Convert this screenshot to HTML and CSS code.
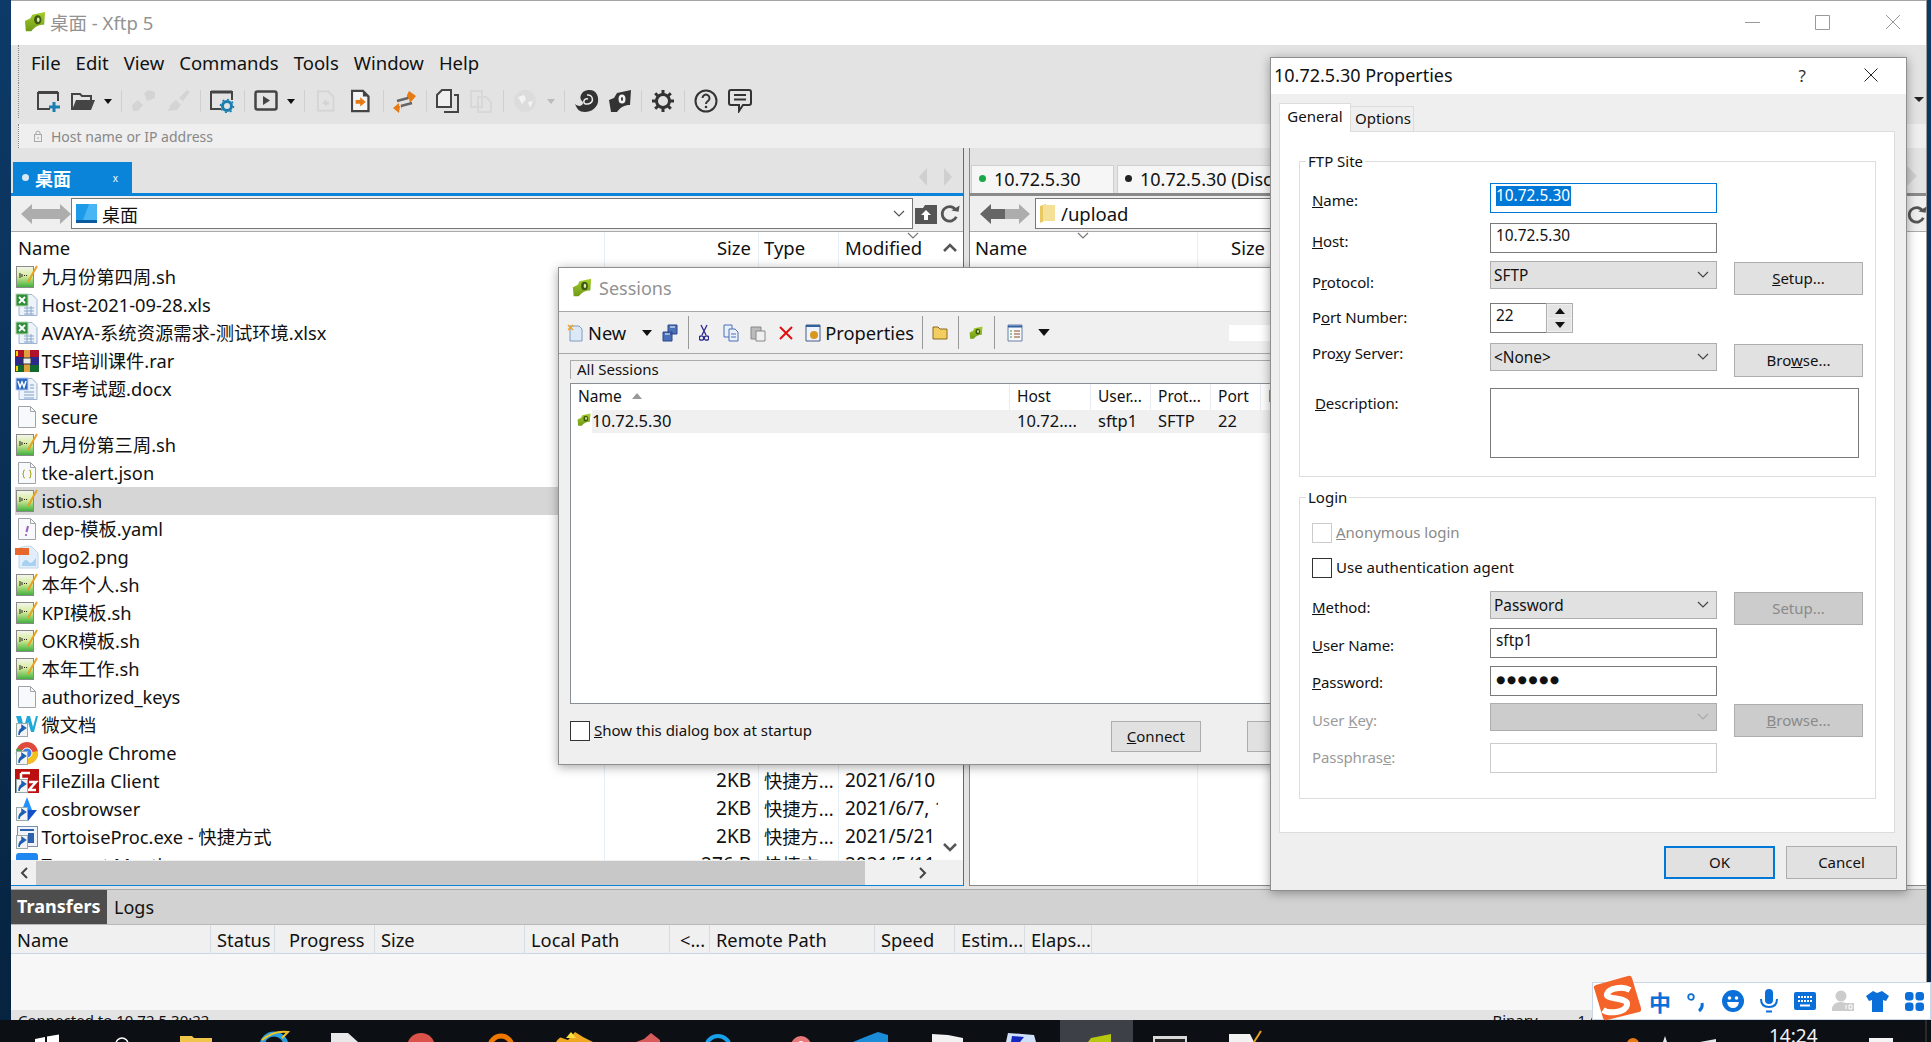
FILE: index.html
```html
<!DOCTYPE html>
<html lang="en">
<head>
<meta charset="utf-8">
<title>桌面 - Xftp 5</title>
<link rel="stylesheet" href="styles.css">
</head>
<body>
<svg class="defs" width="0" height="0">
  <defs>
    <linearGradient id="gGreen" x1="0" y1="0" x2="0" y2="1"><stop offset="0" stop-color="#f4f6ee"/><stop offset=".45" stop-color="#d8ec9a"/><stop offset="1" stop-color="#3cae3a"/></linearGradient>
    <linearGradient id="gLeaf" x1="0" y1="0" x2="0" y2="1"><stop offset="0" stop-color="#a5cf2a"/><stop offset="1" stop-color="#6f9a18"/></linearGradient>
    <symbol id="xftp" viewBox="0 0 24 24"><path d="M1 11l6-3 2-4 14-3-1 14c-6 0-10 2-14 7l-6 0z" fill="url(#gLeaf)"/><ellipse cx="15" cy="9.500" rx="4" ry="5" fill="#3f5a10"/><ellipse cx="15.500" cy="9.500" rx="1.500" ry="2.500" fill="#dfe9b0"/></symbol>
    <symbol id="ics" viewBox="0 0 24 24"><rect x="1.500" y="1.500" width="17" height="21" fill="url(#gGreen)" stroke="#8a8a8a"/><path d="M5 8v5M7 9v3M9 10.500h1M11 10.500h1" stroke="#222" fill="none"/><path d="M13 17L22 1" stroke="#e8a020" stroke-width="2"/></symbol>
    <symbol id="icxls" viewBox="0 0 24 24"><path d="M4 1.500h13l5 5v16H4z" fill="#eef3fa" stroke="#9db4d2"/><path d="M9 15h10M9 18h10M9 21h10M12 13v9M16 13v9" stroke="#8ba7cb"/><rect x="1" y="1" width="12" height="12" fill="#2f8f3c" stroke="#b8d8b0"/><path d="M4 4l6 6M10 4l-6 6" stroke="#fff" stroke-width="1.800"/></symbol>
    <symbol id="icdoc" viewBox="0 0 24 24"><path d="M4 1.500h13l5 5v16H4z" fill="#eef3fa" stroke="#9db4d2"/><path d="M9 15h10M9 18h10M9 21h10M15 8h4M15 11h4" stroke="#7f9ecb"/><rect x="1" y="1" width="12" height="12" fill="#2d68c4" stroke="#bcd0ee"/><path d="M3 4l2 6 2-5 2 5 2-6" stroke="#fff" stroke-width="1.500" fill="none"/></symbol>
    <symbol id="icrar" viewBox="0 0 24 24"><rect y="1" width="24" height="7" fill="#b0122a"/><rect y="8" width="24" height="8" fill="#2a2a8c"/><rect y="16" width="24" height="7" fill="#116a2c"/><rect x="9" y="1" width="6" height="22" fill="#e0a040"/><rect x="8" y="9" width="8" height="6" fill="#eee" stroke="#333"/><path d="M2 2v5M2 17v5" stroke="#ffd000" stroke-width="2"/></symbol>
    <symbol id="icblank" viewBox="0 0 24 24"><path d="M3.500 1.500h12l5 5v16h-17z" fill="#f8f9fa" stroke="#a0a4a8"/><path d="M15.500 1.500v5h5" fill="none" stroke="#a0a4a8"/></symbol>
    <symbol id="icjson" viewBox="0 0 24 24"><use href="#icblank"/><path d="M10 9q-2 0-1.500 2t-1 2q1.500 0 1 2t1.500 2M14 9q2 0 1.500 2t1 2q-1.500 0-1 2t-1.500 2" fill="none" stroke="#a9a91c"/></symbol>
    <symbol id="icyaml" viewBox="0 0 24 24"><use href="#icblank"/><path d="M13 9l-1.500 6" stroke="#9a5cc4" stroke-width="2"/><circle cx="11" cy="18" r="1.100" fill="#9a5cc4"/></symbol>
    <symbol id="icpng" viewBox="0 0 24 24"><path d="M4 3c6-2 12-3 14 0l5 5v15H4z" fill="#e2effa" stroke="#c0d4e8"/><path d="M7 19c2-5 5-5 7-2s5-2 7-4v8H7z" fill="#a8d0f0"/><rect y="3" width="14" height="7" fill="#e8672a"/></symbol>
    <symbol id="lnk" viewBox="0 0 24 24"><rect x="1.500" y="10.500" width="11" height="13" fill="#f4f4f4" stroke="#9aa"/><path d="M4 22c0-6 2-7 5-7M7 12.500l3.500 2.500-3.500 2.500z" stroke="#1c5fb4" stroke-width="1.500" fill="#1c5fb4"/></symbol>
    <symbol id="back" viewBox="0 0 25 22"><path d="M0 11L11 1v5h14v10H11v5z" fill="currentColor"/></symbol>
    <symbol id="fwd" viewBox="0 0 25 22"><path d="M25 11L14 1v5H0v10h14v5z" fill="currentColor"/></symbol>
    <symbol id="refresh" viewBox="0 0 24 24"><path d="M20 15a8 8 0 1 1-1-8" fill="none" stroke="#555" stroke-width="3"/><path d="M15 9h8v-7z" transform="rotate(10 19 6)" fill="#555"/></symbol>
    <symbol id="chev" viewBox="0 0 12 8"><path d="M1 1l5 5 5-5" fill="none" stroke="currentColor" stroke-width="1.200"/></symbol>
    <symbol id="drop" viewBox="0 0 10 6"><path d="M0 0h10L5 6z" fill="currentColor"/></symbol>
  </defs>
</svg>

<div class="desktop">
  <main class="xftp">
    <header class="title">
      <svg class="title-ico" width="24" height="22"><use href="#xftp"/></svg>
      <span class="title-text">桌面 - Xftp 5</span>
      <svg class="winctl" width="170" height="20" viewBox="0 0 170 20" fill="none" stroke="#999"><path d="M0 10.500h15M70.500 3.500h14v14h-14zM141 3l14 14M155 3l-14 14"/></svg>
    </header>
    <nav class="menu"><span>File</span><span>Edit</span><span>View</span><span>Commands</span><span>Tools</span><span>Window</span><span>Help</span></nav>
    <div class="toolbar">
      <svg width="26" height="24" viewBox="0 0 26 24" fill="none" stroke="#444" stroke-width="2"><path d="M14 20H2V4h20v8M2 3h20" /><path d="M2 3.500h20" stroke-width="3"/><path d="M18 13v10M13 18h11" stroke="#1a7fb0" stroke-width="3"/></svg>
      <svg width="24" height="24" viewBox="0 0 24 24"><path d="M1 21V5h8l2 2h9v4" fill="none" stroke="#444" stroke-width="2"/><path d="M1 21l4-10h19l-4 10z" fill="#444"/></svg>
      <svg class="dk" width="8" height="24" viewBox="0 0 8 24"><path d="M0 10h8l-4 5z" fill="#111"/></svg>
      <i class="sep"></i>
      <svg width="27" height="24" viewBox="0 0 27 24" fill="#d4d4d4"><path d="M2 22l-1-6 6-5 5 5-5 6zM16 12l-3-8 5-3 6 2 0 6z"/></svg>
      <svg width="24" height="24" viewBox="0 0 24 24" fill="#d4d4d4"><path d="M1 22l3-7 5-4 5 5-4 5zM12 9l8-8 3 2-7 9z"/></svg>
      <i class="sep"></i>
      <svg width="25" height="24" viewBox="0 0 25 24" fill="none"><path d="M11 20H1V3h21v8" stroke="#444" stroke-width="2"/><path d="M1 3h21" stroke="#444" stroke-width="3"/><circle cx="17" cy="17" r="4.500" stroke="#1a7fb0" stroke-width="3"/><circle cx="17" cy="17" r="6.500" stroke="#1a7fb0" stroke-width="1.500" stroke-dasharray="2 3"/></svg>
      <i class="sep"></i>
      <svg width="24" height="24" viewBox="0 0 24 24"><rect x="1.500" y="2.500" width="21" height="18" rx="2" fill="none" stroke="#444" stroke-width="2.500"/><path d="M9 7l7 4.500-7 4.500z" fill="#444"/></svg>
      <svg width="8" height="24" viewBox="0 0 8 24"><path d="M0 10h8l-4 5z" fill="#111"/></svg>
      <i class="sep"></i>
      <svg class="pad3" width="23" height="24" viewBox="0 0 23 24"><path d="M1 1h12l6 6v16H1z" fill="none" stroke="#d4d4d4" stroke-width="2"/><path d="M6 14l5-4v3h3v3h-3v3z" fill="#d4d4d4"/></svg>
      <svg class="pad5" width="25" height="24" viewBox="0 0 25 24"><path d="M1 1h12l6 6v16H1z" fill="#f5f5f5" stroke="#444" stroke-width="2.500"/><path d="M13 1l6 6h-6z" fill="#444"/><path d="M5 11h5V8l6 5-6 5v-3H5z" fill="#e87a14"/></svg>
      <i class="sep"></i>
      <svg width="24" height="24" viewBox="0 0 24 24"><path d="M14 10v-3l-2 1 2-1V6l2-4 7 5-6 7-1-4z" fill="#e87a14"/><path d="M4 12l11-3" stroke="#666" stroke-width="2.500"/><path d="M9 17v3L7 16l0 1-1 7-6-5 6-5 0 3z" fill="#e87a14"/><path d="M8 17l11-3" stroke="#666" stroke-width="2.500"/></svg>
      <i class="sep"></i>
      <svg width="25" height="24" viewBox="0 0 25 24" fill="none" stroke="#444" stroke-width="2"><path d="M1 18V6l5-5h9v17z" fill="#f0f0f0"/><path d="M18 6h4v17H8"/></svg>
      <svg width="24" height="24" viewBox="0 0 24 24" fill="none" stroke="#d8d8d8" stroke-width="2"><path d="M1 2h11v16H1zM8 8h8l5 5v10H8z"/></svg>
      <i class="sep"></i>
      <svg width="25" height="24" viewBox="0 0 25 24"><circle cx="12" cy="12" r="11" fill="#dcdcdc"/><path d="M5 8l6-2 2 4-4 5zM15 13l5-1-3 7z" fill="#f3f3f3"/></svg>
      <svg width="8" height="24" viewBox="0 0 8 24"><path d="M0 10h8l-4 5z" fill="#bbb"/></svg>
      <i class="sep"></i>
      <svg width="25" height="24" viewBox="0 0 25 24"><path d="M1 15C7 20 11 14 8 12S6 2 14 1s11 6 10 12-7 10-13 10S3 20 1 15z" fill="#333"/><path d="M13 6c6-1 8 8 1 9s-4-7 0-5" fill="none" stroke="#eee" stroke-width="1.500"/></svg>
      <svg width="24" height="24" viewBox="0 0 24 24"><path d="M1 11l5-2 3-5 14-3-1 15c-6 0-9 2-13 7H3z" fill="#333"/><ellipse cx="14" cy="10" rx="3.500" ry="4.500" fill="#f2f2f2"/><ellipse cx="14" cy="10" rx="1" ry="2" fill="#333"/></svg>
      <i class="sep"></i>
      <svg width="24" height="24" viewBox="0 0 24 24"><circle cx="12" cy="12" r="6.500" fill="none" stroke="#333" stroke-width="3"/><path d="M12 1v5M12 18v5M1 12h5M18 12h5M4.200 4.200l3.500 3.500M16.300 16.300l3.500 3.500M19.800 4.200l-3.500 3.500M7.700 16.300l-3.500 3.500" stroke="#333" stroke-width="3"/></svg>
      <i class="sep"></i>
      <svg width="25" height="24" viewBox="0 0 25 24"><circle cx="12" cy="12" r="10.500" fill="none" stroke="#333" stroke-width="2"/><path d="M8.500 9a3.500 3.500 0 1 1 5.500 3c-1.500 1-2 1.500-2 3" fill="none" stroke="#333" stroke-width="2"/><circle cx="12" cy="18" r="1.300" fill="#333"/></svg>
      <svg width="24" height="24" viewBox="0 0 24 24" fill="none" stroke="#333" stroke-width="2"><path d="M3 1h18q2 0 2 2v11q0 2-2 2h-6l-4 6v-6H3q-2 0-2-2V3q0-2 2-2zM6 6h12M6 10.500h12"/></svg>
      <svg class="tb-end" width="10" height="24" viewBox="0 0 10 24"><path d="M0 11h10l-5 5z" fill="#222"/></svg>
    </div>
    <div class="addr-wrap">
      <div class="addr">
        <svg width="10" height="12" viewBox="0 0 10 12" fill="none" stroke="#aaa"><rect x="1.500" y="4.500" width="7" height="7"/><path d="M3 4V2q2-2 4 0v2M5 7v2"/></svg>
        <span>Host name or IP address</span>
      </div>
    </div>

    <div class="panes">
      <section class="pane pane-l">
        <div class="tabs tabs-l">
          <div class="tab-active"><i class="dot"></i><b>桌面</b><span class="x">x</span></div>
          <div class="tab-arrows"><svg width="10" height="18" viewBox="0 0 10 18"><path d="M9 0v18L1 9z" fill="#cfcfcf"/></svg><svg width="10" height="18" viewBox="0 0 10 18"><path d="M1 0v18l8-9z" fill="#cfcfcf"/></svg></div>
        </div>
        <div class="navbar">
          <div class="arrows"><svg width="25" height="22"><use href="#back"/></svg><svg width="25" height="22"><use href="#fwd"/></svg></div>
          <div class="combo-path">
            <svg width="23" height="21" viewBox="0 0 23 21"><path d="M1 1h21v16H1z" fill="#1e9be8"/><path d="M1 17h21v3H1z" fill="#0a5aa0"/><path d="M14 1h8v16H8z" fill="#48b5f5"/></svg>
            <span class="path-text">桌面</span>
            <svg class="chev" width="12" height="8"><use href="#chev"/></svg>
          </div>
          <svg class="upfolder" width="24" height="22" viewBox="0 0 24 22"><path d="M1 5h8l2-3h12v19H1z" fill="#555"/><path d="M12 7l5 5h-3v5h-4v-5H7z" fill="#fff"/></svg>
          <svg width="22" height="24"><use href="#refresh"/></svg>
        </div>
        <div class="list">
          <div class="rows">
            <div class="row head"><span class="c1">Name</span><span class="c2">Size</span><span class="c3">Type</span><span class="c4 sorted">Modified<svg class="caret" width="12" height="8"><use href="#chev"/></svg></span></div>
            <div class="row"><span class="c1"><svg class="ic"><use href="#ics"/></svg>九月份第四周.sh</span></div>
            <div class="row"><span class="c1"><svg class="ic"><use href="#icxls"/></svg>Host-2021-09-28.xls</span></div>
            <div class="row"><span class="c1"><svg class="ic"><use href="#icxls"/></svg>AVAYA-系统资源需求-测试环境.xlsx</span></div>
            <div class="row"><span class="c1"><svg class="ic"><use href="#icrar"/></svg>TSF培训课件.rar</span></div>
            <div class="row"><span class="c1"><svg class="ic"><use href="#icdoc"/></svg>TSF考试题.docx</span></div>
            <div class="row"><span class="c1"><svg class="ic"><use href="#icblank"/></svg>secure</span></div>
            <div class="row"><span class="c1"><svg class="ic"><use href="#ics"/></svg>九月份第三周.sh</span></div>
            <div class="row"><span class="c1"><svg class="ic"><use href="#icjson"/></svg>tke-alert.json</span></div>
            <div class="row sel"><span class="c1"><svg class="ic"><use href="#ics"/></svg>istio.sh</span></div>
            <div class="row"><span class="c1"><svg class="ic"><use href="#icyaml"/></svg>dep-模板.yaml</span></div>
            <div class="row"><span class="c1"><svg class="ic"><use href="#icpng"/></svg>logo2.png</span></div>
            <div class="row"><span class="c1"><svg class="ic"><use href="#ics"/></svg>本年个人.sh</span></div>
            <div class="row"><span class="c1"><svg class="ic"><use href="#ics"/></svg>KPI模板.sh</span></div>
            <div class="row"><span class="c1"><svg class="ic"><use href="#ics"/></svg>OKR模板.sh</span></div>
            <div class="row"><span class="c1"><svg class="ic"><use href="#ics"/></svg>本年工作.sh</span></div>
            <div class="row"><span class="c1"><svg class="ic"><use href="#icblank"/></svg>authorized_keys</span></div>
            <div class="row"><span class="c1"><svg class="ic" viewBox="0 0 24 24"><path d="M1 3h5l3 11 3-11h3l3 11 3-11h2l-4 16h-3l-3-10-3 10H6z" fill="#1fa8d8"/><use href="#lnk"/></svg>微文档</span></div>
            <div class="row"><span class="c1"><svg class="ic" viewBox="0 0 24 24"><circle cx="12" cy="12" r="11" fill="#e04a3a"/><path d="M12 12L23 10a11 11 0 0 1-11 13z" fill="#f4c020"/><path d="M12 12l0 11A11 11 0 0 1 2 7z" fill="#3aa850"/><circle cx="12" cy="12" r="5" fill="#3a80e8" stroke="#fff"/><use href="#lnk"/></svg>Google Chrome</span></div>
            <div class="row"><span class="c1"><svg class="ic" viewBox="0 0 24 24"><rect width="24" height="24" fill="#bb1010"/><path d="M6 4h9M6 4v12M6 10h7M14 13h7l-7 8h7" stroke="#fff" stroke-width="2.500" fill="none"/><use href="#lnk"/></svg>FileZilla Client</span><span class="c2">2KB</span><span class="c3">快捷方...</span><span class="c4">2021/6/10</span></div>
            <div class="row"><span class="c1"><svg class="ic" viewBox="0 0 24 24"><path d="M12 0l5 13H7z" fill="#1e90ff"/><path d="M7 13h15l-9 11z" fill="#1450c8"/><use href="#lnk"/></svg>cosbrowser</span><span class="c2">2KB</span><span class="c3">快捷方...</span><span class="c4">2021/6/7, 11</span></div>
            <div class="row"><span class="c1"><svg class="ic" viewBox="0 0 24 24"><rect x="2.500" y="1.500" width="20" height="20" fill="#f0f4fa" stroke="#7a90b0"/><path d="M5 5h14" stroke="#2a62b0" stroke-width="2"/><rect x="13" y="8" width="6" height="10" fill="#2a62b0"/><use href="#lnk"/></svg>TortoiseProc.exe - 快捷方式</span><span class="c2">2KB</span><span class="c3">快捷方...</span><span class="c4">2021/5/21</span></div>
            <div class="row"><span class="c1"><svg class="ic" viewBox="0 0 24 24"><rect x="1" y="0" width="22" height="24" rx="3" fill="#1e88f0"/></svg>Tencent Meeting</span><span class="c2">276 B</span><span class="c3">快捷方...</span><span class="c4">2021/5/11</span></div>
          </div>
          <div class="vscroll"><svg width="14" height="9" viewBox="0 0 14 9"><path d="M1 8l6-6 6 6" fill="none" stroke="#555" stroke-width="2.500"/></svg><svg width="14" height="9" viewBox="0 0 14 9"><path d="M1 1l6 6 6-6" fill="none" stroke="#555" stroke-width="2.500"/></svg></div>
        </div>
        <div class="hscroll">
          <svg width="9" height="12" viewBox="0 0 9 12"><path d="M7 1L2 6l5 5" fill="none" stroke="#444" stroke-width="2"/></svg>
          <i class="thumb"></i>
          <svg width="9" height="12" viewBox="0 0 9 12"><path d="M2 1l5 5-5 5" fill="none" stroke="#444" stroke-width="2"/></svg>
        </div>
      </section>

      <section class="pane pane-r">
        <div class="tabs tabs-r">
          <div class="tab-r"><i class="dot-g"></i>10.72.5.30</div>
          <div class="tab-r tab-r2"><i class="dot-k"></i>10.72.5.30 (Disconnected)</div>
          <svg class="tab-next" width="12" height="20" viewBox="0 0 12 20"><path d="M1 0v20l10-10z" fill="#cfcfcf"/></svg>
        </div>
        <div class="navbar nav-r">
          <div class="arrows"><svg width="25" height="22" class="dark"><use href="#back"/></svg><svg width="25" height="22"><use href="#fwd"/></svg></div>
          <div class="combo-path">
            <svg width="17" height="21" viewBox="0 0 17 21"><path d="M1 3l6-2v16l-6 3z" fill="#e8c860"/><path d="M4 2h12v16H4z" fill="#f5e098"/></svg>
            <span class="path-text upload">/upload</span>
          </div>
          <svg class="r-refresh" width="22" height="24"><use href="#refresh"/></svg>
        </div>
        <div class="list-r">
          <div class="head-r"><span class="r-name">Name<svg class="caret-r" width="12" height="8"><use href="#chev"/></svg></span><span class="r-size">Size</span></div>
        </div>
      </section>
    </div>

    <div class="xtabs"><span class="xtab-on">Transfers</span><span class="xtab">Logs</span></div>
    <div class="xhead"><span>Name</span><span>Status</span><span class="pl14">Progress</span><span>Size</span><span>Local Path</span><span class="pl10">&lt;...</span><span>Remote Path</span><span>Speed</span><span>Estim...</span><span>Elaps...</span></div>
    <div class="xbody"></div>
    <div class="status"><span>Connected to 10.72.5.30:22</span><span class="st-r">Binary</span><span class="st-o">1 Object(s)</span></div>
  </main>

  <footer class="taskbar">
    <svg width="1931" height="22" viewBox="0 0 1931 22">
      <rect x="1060" width="73" height="22" fill="#3d4147"/>
      <path d="M35 22v-3l10-2v5zM47 22v-5.500l12-2V22z" fill="#fff"/>
      <circle cx="122" cy="24" r="6" fill="none" stroke="#fff" stroke-width="1.500"/>
      <path d="M180 22v-6h12l2 2h18v4z" fill="#f1c54a"/>
      <circle cx="274" cy="26" r="12" fill="none" stroke="#2a9fe0" stroke-width="5"/><path d="M262 20q12-10 26-8-4 4-6 6" fill="none" stroke="#f2c22a" stroke-width="2"/>
      <path d="M331 13h17l10 9h-27z" fill="#e8e8e8"/>
      <circle cx="421" cy="27" r="14" fill="#d9534a"/>
      <circle cx="501" cy="27" r="11" fill="none" stroke="#f07800" stroke-width="5"/>
      <path d="M556 22q4-6 6-4l6 2 7-8 8 5 10 5z" fill="#f0a820"/><path d="M571 12l5 6h-10z" fill="#f8e040"/>
      <path d="M636 22l8-3 7-6 9 7v2z" fill="#d85a5a"/>
      <circle cx="718" cy="28" r="12" fill="none" stroke="#18a0e8" stroke-width="4"/>
      <circle cx="801" cy="26" r="10" fill="#e87878"/><circle cx="801" cy="24" r="3" fill="#fff"/>
      <path d="M853 22l12-5 13-5 10 3v7z" fill="#1a8cd8"/>
      <path d="M932 22v-8l16 1 15 3v4z" fill="#f2f2f2"/>
      <path d="M1008 13l26 2 2 7h-30z" fill="#cfe0f8"/><path d="M1012 16l12 1-4 5h-9z" fill="#1528c0"/>
      <path d="M1088 22l3-4 20-4v8z" fill="#b7c810"/>
      <rect x="1153" y="16" width="34" height="6" fill="#d8d8d8"/><rect x="1155" y="19" width="30" height="3" fill="#222"/>
      <path d="M1229 14h21l4 8h-25z" fill="#f2f2f2"/><path d="M1254 22l7-11" stroke="#e8a020" stroke-width="2"/>
      <circle cx="1633" cy="24" r="6" fill="#e87a14"/><path d="M1663 22l2-6 2 6zM1700 22l16-3v3z" fill="#e8e8e8"/>
      <rect x="1869" y="18" width="24" height="4" fill="#f4f4f4"/>
      <path d="M1926 0v22" stroke="#444"/>
    </svg>
    <span class="clock">14:24</span>
  </footer>

  <section class="dlg sessions">
    <div class="dlg-title"><svg width="22" height="20"><use href="#xftp"/></svg><span>Sessions</span></div>
    <div class="s-tools">
      <svg class="s16" viewBox="0 0 16 18"><path d="M3 2h9l3 3v12H3z" fill="#dbe8f6" stroke="#7e9cc0"/><path d="M1 1l5 5M6 1L1 6" stroke="#f0a020" stroke-width="1.500"/></svg>
      <span class="s-lbl">New</span>
      <svg class="s-drop" width="10" height="6"><use href="#drop"/></svg>
      <svg class="s16 s-stack" viewBox="0 0 16 18"><path d="M6 1h9v9H6zM1 8h9v9H1z" fill="#4a70b8" stroke="#27468a"/><path d="M8 3h5M3 10h5" stroke="#fff"/></svg>
      <i class="s-sep m-a"></i>
      <svg class="s10" viewBox="0 0 10 18" fill="none" stroke="#2a2a90" stroke-width="1.300"><path d="M2 1l5 10M8 1L3 11"/><circle cx="2.500" cy="14" r="2.200"/><circle cx="7.500" cy="14" r="2.200"/></svg>
      <svg class="s16 m14" viewBox="0 0 16 18"><path d="M1 1h8v12H1z" fill="#eaf0fa" stroke="#4a70b8"/><path d="M6 5h6l3 3v9H6z" fill="#eaf0fa" stroke="#4a70b8"/><path d="M8 10h5M8 13h5" stroke="#4a70b8"/></svg>
      <svg class="s16 m11" viewBox="0 0 16 18"><path d="M1 3h10v12H1z" fill="#bbb" stroke="#888"/><path d="M6 7h9v10H6z" fill="#f0f0f0" stroke="#888"/></svg>
      <svg class="s14 m13" viewBox="0 0 14 18"><path d="M1 3l12 12M13 3L1 15" stroke="#e01010" stroke-width="2"/></svg>
      <svg class="s16 m12" viewBox="0 0 16 18"><path d="M1 1h14v16H1z" fill="#eef2fa" stroke="#4a5a80"/><path d="M1 2h14" stroke="#3060a0" stroke-width="2"/><circle cx="9" cy="11" r="4" fill="#d89820"/></svg>
      <span class="s-lbl m4">Properties</span>
      <i class="s-sep m8"></i>
      <svg class="s16 m9" viewBox="0 0 16 18"><path d="M1 15V3h5l2 2h7v10z" fill="#f2cd60" stroke="#8a6a20"/></svg>
      <i class="s-sep m10"></i>
      <svg class="s14 m10" viewBox="0 0 24 24"><use href="#xftp"/></svg>
      <i class="s-sep m11"></i>
      <svg class="s16 m12" viewBox="0 0 16 18"><path d="M1 1h14v16H1z" fill="#f6f8fc" stroke="#6a80a8"/><path d="M1 2.500h14" stroke="#3060a0" stroke-width="2"/><path d="M3 7h2M3 10h2M3 13h2" stroke="#3a9a3a"/><path d="M7 7h6M7 10h6M7 13h6" stroke="#8a4a20"/></svg>
      <svg class="s-drop m15" width="12" height="7" viewBox="0 0 10 6"><use href="#drop"/></svg>
      <i class="s-search"></i>
    </div>
    <div class="all-sess">All Sessions</div>
    <div class="s-list">
      <div class="s-head"><span>Name<svg class="sort" width="10" height="6" viewBox="0 0 10 6"><path d="M0 6h10L5 0z" fill="#999"/></svg></span><span>Host</span><span>User...</span><span>Prot...</span><span>Port</span><span>L</span></div>
      <div class="s-row"><span class="s-name"><svg width="14" height="14"><use href="#xftp"/></svg><em>10.72.5.30</em></span><span>10.72....</span><span>sftp1</span><span>SFTP</span><span>22</span></div>
    </div>
    <div class="s-foot">
      <label class="chk"><i class="box"></i><span><u>S</u>how this dialog box at startup</span></label>
      <button class="btn b-connect"><u>C</u>onnect</button>
      <button class="btn b-close"></button>
    </div>
  </section>

  <section class="dlg props">
    <div class="p-title"><span>10.72.5.30 Properties</span><span class="qm">?</span><svg width="14" height="14" viewBox="0 0 14 14" fill="none" stroke="#222"><path d="M.5.500l13 13M13.500.500l-13 13"/></svg></div>
    <div class="p-tabs"><span class="p-tab on">General</span><span class="p-tab">Options</span></div>
    <div class="p-panel">
      <fieldset class="fs fs1">
        <legend>FTP Site</legend>
        <div class="fgrid g1">
          <label class="lb mt7"><u>N</u>ame:</label><div class="inp focus"><span class="selected">10.72.5.30</span></div><i></i><i></i>
          <label class="lb mt8"><u>H</u>ost:</label><div class="inp">10.72.5.30</div><i></i><i></i>
          <label class="lb mt11">P<u>r</u>otocol:</label><div class="cmb">SFTP<svg width="12" height="8"><use href="#chev"/></svg></div><i></i><button class="btn b-side m1"><u>S</u>etup...</button>
          <label class="lb mt4">P<u>o</u>rt Number:</label><div class="spin"><div class="inp inp-port">22</div><div class="spin-b"><span><svg width="10" height="6"><use href="#drop" transform="rotate(180 5 3)"/></svg></span><span><svg width="10" height="6"><use href="#drop"/></svg></span></div></div><i></i><i></i>
          <label class="lb">Pro<u>x</u>y Server:</label><div class="cmb">&lt;None&gt;<svg width="12" height="8"><use href="#chev"/></svg></div><i></i><button class="btn b-side m1">Bro<u>w</u>se...</button>
          <label class="lb mt5 ml3"><u>D</u>escription:</label><div class="inp ta"></div>
        </div>
      </fieldset>
      <fieldset class="fs fs2">
        <legend>Login</legend>
        <label class="chk dis c-anon"><i class="box"></i><span><u>A</u>nonymous login</span></label>
        <label class="chk c-auth"><i class="box"></i><span>Use authentication a<u>g</u>ent</span></label>
        <div class="fgrid g2">
          <label class="lb mt6"><u>M</u>ethod:</label><div class="cmb">Password<svg width="12" height="8"><use href="#chev"/></svg></div><i></i><button class="btn b-side m1 dis">Setup...</button>
          <label class="lb mt7"><u>U</u>ser Name:</label><div class="inp">sftp1</div><i></i><i></i>
          <label class="lb mt6"><u>P</u>assword:</label><div class="inp pw">●●●●●●</div><i></i><i></i>
          <label class="lb mt7 dl">User <u>K</u>ey:</label><div class="cmb dis"><svg width="12" height="8"><use href="#chev"/></svg></div><i></i><button class="btn b-side m1 dis"><u>B</u>rowse...</button>
          <label class="lb mt4 dl">Passphras<u>e</u>:</label><div class="inp dis"></div>
        </div>
      </fieldset>
    </div>
    <div class="p-foot"><button class="btn b-ok">OK</button><button class="btn b-cancel">Cancel</button></div>
  </section>

  <aside class="ime">
    <svg class="ime-s" width="48" height="46" viewBox="0 0 48 46"><path d="M3 10L35 1q3-1 4 2l9 30q1 3-2 4L14 45q-3 1-4-2L1 13q-1-2 2-3z" fill="#f4642a"/><path d="M37 15C30 11 16 13 14 19s22 3 20 11-18 9-24 5" fill="none" stroke="#fff" stroke-width="6"/></svg>
    <b class="ime-zh">中</b>
    <svg width="19" height="22" viewBox="0 0 19 22"><circle cx="4" cy="7" r="2.800" fill="none" stroke="#0a6fd8" stroke-width="1.800"/><path d="M15 13q1 5-3 8" fill="none" stroke="#0a6fd8" stroke-width="3"/></svg>
    <svg width="22" height="22" viewBox="0 0 22 22"><circle cx="11" cy="11" r="11" fill="#0a6fd8"/><circle cx="7.500" cy="8" r="1.800" fill="#fff"/><circle cx="14.500" cy="8" r="1.800" fill="#fff"/><path d="M5 12h12q-1 6-6 6t-6-6z" fill="#fff"/></svg>
    <svg width="18" height="24" viewBox="0 0 18 24"><rect x="5" y="0" width="8" height="15" rx="4" fill="#0a6fd8"/><path d="M1 10q0 8 8 8t8-8M6 22.500h6" fill="none" stroke="#0a6fd8" stroke-width="2"/></svg>
    <svg width="22" height="18" viewBox="0 0 22 18"><rect width="22" height="18" rx="2" fill="#0a6fd8"/><path d="M4 5h14M4 9h14" stroke="#fff" stroke-width="2" stroke-dasharray="2 1"/><path d="M6 13.500h10" stroke="#fff" stroke-width="2"/></svg>
    <svg class="ime-p" width="18" height="22" viewBox="0 0 18 22"><circle cx="9" cy="6" r="5.500" fill="#ccc"/><path d="M0 20q0-8 9-8 4 0 6 2v7H0z" fill="#ccc"/><rect x="11" y="13" width="11" height="8" fill="#ccc"/><path d="M14 15v4M17 15h3v4h-3z" fill="none" stroke="#fff"/></svg>
    <svg width="23" height="21" viewBox="0 0 23 21"><path d="M7 0l4 2 5-2 7 5-3 5-3-1v12H6V9l-3 1-3-5z" fill="#0a6fd8"/></svg>
    <svg width="19" height="19" viewBox="0 0 19 19" fill="#0a6fd8"><rect width="8.500" height="8.500" rx="3"/><rect x="10.500" width="8.500" height="8.500" rx="3"/><rect y="10.500" width="8.500" height="8.500" rx="3"/><rect x="10.500" y="10.500" width="8.500" height="8.500" rx="3"/></svg>
  </aside>
</div>
</body>
</html>
```

FILE: styles.css
```css
* { box-sizing: border-box; }
html, body { margin: 0; padding: 0; }
body {
  font-family: "Noto Sans", "Noto Sans CJK SC", sans-serif;
  color: #111;
  background: #0a2a4a;
  overflow: hidden;
}
.defs { position: absolute; }
button { font: inherit; color: inherit; padding: 0; }
i, em { font-style: normal; }
svg { display: block; flex: none; }
.ime-p { overflow: visible; }

.desktop {
  position: relative;
  width: 1931px;
  height: 1042px;
  overflow: hidden;
  background: linear-gradient(#0d3a68, #06233f);
}

.xftp {
  margin-left: 11px;
  width: 1916px;
  height: 1020px;
  background: #e3e3e3;
  display: flex;
  flex-direction: column;
  border-right: 1px solid #9a9a9a;
}

.title {
  height: 45px;
  flex: none;
  background: #fff;
  border-top: 1px solid #a5a5a5;
  display: flex;
  align-items: center;
  padding: 0 0 2px 12px;
}
.title-ico { margin-right: 3px; }
.title-text { font-size: 18.500px; color: #929292; }
.winctl { margin-left: auto; margin-right: 11px; }

.menu {
  height: 38px;
  flex: none;
  display: flex;
  align-items: center;
  margin-left: 7px;
  padding: 0 0 4px 12px;
  gap: 15px;
  font-size: 18.500px;
  border-left: 1px dotted #888;
}

.toolbar {
  height: 35px;
  flex: none;
  margin-left: 7px;
  padding-left: 17px;
  display: flex;
  align-items: center;
  gap: 9px;
  border-left: 1px dotted #888;
  position: relative;
}
.sep { width: 1px; height: 22px; background: #d0d0d0; flex: none; }
.pad3 { margin-left: 3px; width: 20px; }
.pad5 { margin-left: 5px; width: 23px; }
.tb-end { position: absolute; left: 1895px; top: 3px; }

.addr-wrap { height: 30px; flex: none; padding: 6px 0 0 7px; }
.addr {
  height: 24px;
  background: #efefef;
  border-left: 1px dotted #888;
  display: flex;
  align-items: center;
  gap: 8px;
  padding-left: 14px;
  font-size: 14px;
  color: #888;
}

.panes { height: 741px; flex: none; display: flex; gap: 5px; }
.pane { display: flex; flex-direction: column; height: 738px; }
.pane-l { width: 953px; flex: none; border-right: 1px solid #0a84d8; border-bottom: 1px solid #0a84d8; }
.pane-r { flex: 1; min-width: 0; border-left: 1px solid #888; border-bottom: 1px solid #888; background: #fff; overflow: hidden; }

.tabs { height: 48px; flex: none; background: #e3e3e3; display: flex; align-items: flex-end; }
.tabs-l { border-bottom: 3px solid #0a84d8; padding-left: 2px; }
.tabs-r { border-bottom: 3px solid #8a8a8a; padding-left: 1px; gap: 3px; }
.tab-active {
  width: 119px;
  height: 31px;
  background: #0a84d8;
  color: #fff;
  display: flex;
  align-items: center;
  padding-left: 9px;
  font-size: 18px;
}
.dot { width: 7px; height: 7px; border-radius: 50%; background: #d8e8f4; margin-right: 6px; }
.x { margin-left: auto; margin-right: 14px; font-size: 10px; }
.tab-arrows { margin-left: 786px; display: flex; gap: 15px; padding-bottom: 7px; }
.tab-r {
  width: 143px;
  height: 28px;
  background: #f6f6f6;
  border: 1px solid #cfcfcf;
  border-bottom: 0;
  display: flex;
  align-items: center;
  padding: 0 0 2px 7px;
  font-size: 18px;
  white-space: nowrap;
  overflow: hidden;
  flex: none;
}
.tab-r2 { width: 700px; }
.dot-g { width: 7px; height: 7px; border-radius: 50%; background: #18a848; margin-right: 8px; flex: none; }
.dot-k { width: 7px; height: 7px; border-radius: 50%; background: #222; margin-right: 8px; flex: none; }
.tab-next { position: absolute; left: 1906px; top: 166px; }

.navbar {
  height: 36px;
  flex: none;
  background: #efefef;
  display: flex;
  align-items: center;
  padding-left: 10px;
  border-bottom: 1px solid #aaa;
}
.arrows { display: flex; width: 50px; flex: none; color: #adadad; }
.arrows .dark { color: #666; }
.combo-path {
  width: 842px;
  height: 31px;
  background: #fff;
  border: 1px solid #777;
  display: flex;
  align-items: center;
  padding-left: 3px;
  gap: 4px;
  flex: none;
}
.path-text { font-size: 18px; }
.upload { margin-left: 1px; font-size: 18.500px; }
.chev { margin-left: auto; margin-right: 7px; color: #555; }
.upfolder { margin-left: 1px; }
.nav-r .combo-path { margin-left: 5px; }
.r-refresh { position: absolute; left: 1905px; top: 203px; }

.list { flex: 1; display: flex; min-height: 0; background: #fff; }
.rows {
  width: 927px;
  flex: none;
  overflow: hidden;
  font-size: 18.300px;
  background:
    linear-gradient(#e6eef6, #e6eef6) 593px 0 / 1px 100% no-repeat,
    linear-gradient(#e6eef6, #e6eef6) 747px 0 / 1px 100% no-repeat,
    linear-gradient(#e6eef6, #e6eef6) 827px 0 / 1px 100% no-repeat;
}
.row {
  display: grid;
  grid-template-columns: 593px 154px 80px 100px;
  height: 28px;
  padding-bottom: 2px;
  align-items: center;
  white-space: nowrap;
}
.row.head { height: 31px; font-size: 18.500px; padding-bottom: 0; }
.row.sel { background: #d6d6d6; margin-left: 4px; grid-template-columns: 589px 154px 80px 100px; }
.row.sel .c1 { padding-left: 0; }
.c1 { display: flex; align-items: center; gap: 2.500px; padding-left: 4px; }
.head .c1 { padding-left: 7px; }
.c2 { text-align: right; padding-right: 7px; font-size: 19px; }
.c3 { padding-left: 6px; }
.c4 { padding-left: 7px; overflow: hidden; font-size: 19px; }
.head .c2, .head .c4 { font-size: 18.500px; }
.sorted { position: relative; overflow: visible; }
.caret { position: absolute; left: 69px; top: -3px; color: #777; }
.ic { width: 24px; height: 24px; margin-top: 2px; }
.vscroll {
  width: 24px;
  flex: none;
  display: flex;
  flex-direction: column;
  justify-content: space-between;
  align-items: center;
  padding: 11px 0 8px;
}
.hscroll {
  height: 25px;
  flex: none;
  background: #f0f0f0;
  display: flex;
  align-items: center;
  padding-left: 9px;
}
.thumb { width: 829px; height: 24px; background: #c8c8c8; margin: 0 53px 0 7px; }

.list-r { flex: 1; background: linear-gradient(#e6eef6, #e6eef6) 227px 0 / 1px 100% no-repeat, #fff; }
.head-r { height: 31px; display: flex; align-items: center; font-size: 18.500px; padding-left: 5px; border-bottom: 0; }
.r-name { position: relative; width: 473px; }
.caret-r { position: absolute; left: 102px; top: -3px; color: #777; }
.r-size { margin-left: -217px; }

.xtabs {
  height: 36px;
  flex: none;
  background: #d2d2d2;
  border-top: 1px solid #aaa;
  border-bottom: 1px solid #b8b8b8;
  display: flex;
  align-items: stretch;
  font-size: 18px;
}
.xtab-on { width: 96px; background: #4d4d4d; color: #fff; font-weight: 700; padding-left: 6px; line-height: 32px; }
.xtab { padding-left: 7px; line-height: 34px; }
.xhead {
  height: 29px;
  flex: none;
  display: grid;
  grid-template-columns: 200px 64px 100px 150px 145px 40px 165px 80px 70px 67px 1fr;
  align-items: center;
  background: #f0f0f0;
  border-bottom: 1px solid #c9d6e6;
  font-size: 18.300px;
  white-space: nowrap;
}
.xhead span { padding-left: 6px; height: 100%; border-right: 1px solid #d8dde4; line-height: 29px; }
.xhead .pl14 { padding-left: 14px; }
.xhead .pl10 { padding-left: 10px; }
.xbody { height: 56px; flex: none; background: #f7f7f7; }
.status { height: 10px; flex: none; overflow: hidden; font-size: 15px; line-height: 20px; padding-left: 7px; display: flex; }
.st-r { margin-left: 1283px; }
.st-o { margin-left: 40px; }

.taskbar { height: 22px; background: #0c1015; position: relative; overflow: hidden; }
.clock { position: absolute; left: 1769px; top: 3px; color: #f2f2f2; font-size: 19px; line-height: 26px; }

.dlg { position: absolute; background: #efefef; border: 1px solid #8f8f8f; box-shadow: 0 2px 10px rgba(0,0,0,.35); }
.btn { background: #e1e1e1; border: 1px solid #adadad; display: block; font-size: 15px; padding-bottom: 2px; }

/* Sessions window */
.sessions { left: 558px; top: 267px; width: 760px; height: 498px; font-size: 15px; }
.dlg-title {
  height: 44px;
  background: #fff;
  border-bottom: 1px solid #a8a8a8;
  display: flex;
  align-items: center;
  gap: 6px;
  padding: 0 0 4px 12px;
  font-size: 18px;
  color: #929292;
}
.s-tools {
  height: 42px;
  border-bottom: 1px solid #a8a8a8;
  display: flex;
  align-items: center;
  padding-left: 8px;
  background: #f0f0f0;
}
.s16 { width: 16px; height: 18px; }
.s14 { width: 14px; height: 18px; }
.s10 { width: 10px; height: 18px; margin-left: 10px; }
.s-lbl { font-size: 18.300px; margin-left: 5px; }
.s-drop { margin-left: 16px; color: #111; }
.s-stack { margin-left: 10px; }
.s-sep { width: 1px; height: 33px; background: #999; flex: none; }
.m-a { margin-left: 10px; }
.m4 { margin-left: 4px; }
.m8 { margin-left: 8px; }
.m9 { margin-left: 9px; }
.m10 { margin-left: 10px; }
.m11 { margin-left: 11px; }
.m12 { margin-left: 12px; }
.m13 { margin-left: 13px; }
.m14 { margin-left: 14px; }
.m15 { margin-left: 15px; }
.s-search { width: 100px; height: 16px; background: #fff; margin-left: 179px; }
.all-sess {
  margin: 6px 0 0 11px;
  height: 19px;
  background: #f0f0f0;
  border-top: 1px solid #aaa;
  border-left: 1px solid #aaa;
  padding-left: 6px;
  line-height: 16px;
  font-size: 15px;
}
.s-list {
  margin: 4px 0 0 11px;
  height: 321px;
  background: #fff;
  border: 1px solid #8a8f96;
  border-right: 0;
  overflow: hidden;
}
.s-head, .s-row {
  display: grid;
  grid-template-columns: 439px 81px 60px 60px 50px 1fr;
  align-items: center;
  white-space: nowrap;
}
.s-head { height: 26px; font-size: 15.500px; }
.s-head span { padding: 0 0 2px 7px; border-right: 1px solid #e8ecf2; height: 100%; display: flex; align-items: center; }
.sort { margin-left: 10px; }
.s-row { height: 23px; font-size: 16.500px; line-height: 19px; padding-bottom: 3px; }
.s-row span { padding-left: 7px; }
.s-row span.s-name { padding-left: 6px; display: flex; align-items: center; gap: 1px; }
.s-row { background: linear-gradient(#f0f0f0, #f0f0f0) 21px 0 / 100% 100% no-repeat; }
.s-foot { display: flex; align-items: flex-start; padding: 17px 0 0 11px; }
.chk { display: flex; align-items: center; gap: 4px; font-size: 15px; height: 20px; }
.chk span { padding-bottom: 2px; }
.box { width: 20px; height: 20px; background: #fff; border: 1px solid #333; flex: none; }
.b-connect { width: 90px; height: 31px; margin-left: 299px; }
.b-close { width: 60px; height: 31px; margin-left: 46px; }

/* Properties window */
.props { left: 1270px; top: 57px; width: 637px; height: 834px; font-size: 15px; padding: 0 10px 0 8px; }
.p-title {
  height: 36px;
  margin: 0 -10px 0 -8px;
  background: #fff;
  display: flex;
  align-items: center;
  padding: 0 28px 2px 3px;
  font-size: 18px;
}
.qm { margin-left: auto; margin-right: 58px; font-size: 17px; color: #333; }
.p-tabs { height: 38px; display: flex; align-items: flex-end; position: relative; z-index: 1; margin-bottom: -1px; }
.p-tab {
  width: 63px;
  height: 26px;
  border: 1px solid #dcdcdc;
  border-left: 0;
  display: flex;
  align-items: center;
  justify-content: center;
  padding: 0 0 2px 2px;
}
.p-tab.on { width: 72px; height: 29px; background: #fff; border-left: 1px solid #dcdcdc; border-bottom: 0; padding: 0 0 5px 0; }
.p-panel { background: #fff; border: 1px solid #dcdcdc; width: 616px; height: 702px; padding: 19px 18px 0 19px; }
.fs { margin: 0; padding: 0 11px 18px 12px; border: 1px solid #ddd; width: 577px; min-width: 0; }
.fs legend { padding: 0 2px; margin-left: -6px; line-height: 20px; font-size: 15px; }
.fs2 { margin-top: 10px; padding-bottom: 25px; }
.fgrid { display: grid; grid-template-columns: 178px 227px 17px 129px; }
.g1 { margin-top: 12px; grid-template-rows: 40px 38px 42px 40px 45px 70px; }
.g2 { margin-top: 13px; grid-template-rows: 37px 38px 37px 40px 30px; }
.lb { display: block; line-height: 20px; white-space: nowrap; letter-spacing: -.1px; }
.mt4 { margin-top: 4px; }
.mt5 { margin-top: 5px; }
.mt6 { margin-top: 6px; }
.mt7 { margin-top: 7px; }
.mt8 { margin-top: 8px; }
.mt11 { margin-top: 11px; }
.ml3 { margin-left: 3px; }
.dl { color: #9a9a9a; }
.inp {
  height: 30px;
  background: #fff;
  border: 1px solid #7a7a7a;
  padding: 0 5px;
  line-height: 24px;
  white-space: nowrap;
  font-size: 15.400px;
}
.inp.focus { border-color: #0078d7; }
.selected { background: #0078d7; color: #fff; display: inline-block; line-height: 20px; height: 20px; margin-top: 2px; vertical-align: top; padding-right: 1px; }
.inp.dis { border-color: #ccc; }
.inp.pw { font-family: "DejaVu Sans", sans-serif; font-size: 10.500px; letter-spacing: 1.600px; line-height: 24px; }
.inp.ta { grid-column: 2 / span 3; width: 369px; height: 70px; }
.cmb {
  height: 28px;
  background: #e1e1e1;
  border: 1px solid #adadad;
  display: flex;
  align-items: center;
  justify-content: space-between;
  padding: 0 7px 0 3px;
  color: #111;
  font-size: 15.400px;
}
.cmb svg { color: #444; }
.cmb.dis { background: #ccc; justify-content: flex-end; }
.cmb.dis svg { color: #aaa; }
.b-side { height: 33px; }
.m1 { margin-top: 1px; }
.btn.dis { background: #ccc; color: #8a8a8a; }
.spin { display: flex; align-items: stretch; height: 30px; }
.inp-port { width: 56px; flex: none; border-right: 0; }
.spin-b { width: 27px; border: 1px solid #adadad; padding: 1px; display: flex; flex-direction: column; gap: 1px; background: #efefef; }
.spin-b span { flex: 1; display: flex; align-items: center; justify-content: center; background: #e4e4e4; }
.chk.dis { color: #8a8a8a; }
.chk.dis .box { border-color: #ccc; }
.c-anon { margin-top: 16px; }
.c-auth { margin-top: 15px; }
.chk .box { width: 20px; height: 20px; }
.p-foot { display: flex; justify-content: flex-end; gap: 11px; padding: 13px 0 0; margin-right: -1px; }
.b-ok { width: 111px; height: 33px; border: 2px solid #0078d7; }
.b-cancel { width: 111px; height: 33px; }

/* Input method bar */
.ime {
  position: absolute;
  left: 1592px;
  top: 982px;
  width: 339px;
  height: 38px;
  background: #fff;
  border: 1px solid #c8d8ea;
  display: flex;
  align-items: center;
  gap: 16px;
  padding-left: 56px;
}
.ime-s { position: absolute; left: 0; top: -8px; }
.ime-zh { width: 22px; color: #0a6fd8; font-size: 22px; line-height: 22px; font-family: "Noto Sans CJK SC", sans-serif; }
```
